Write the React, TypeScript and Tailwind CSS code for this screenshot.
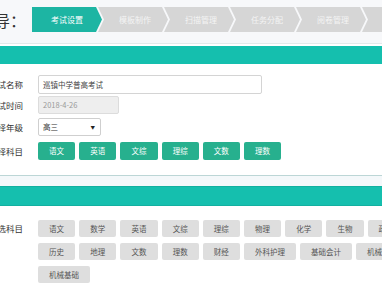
import React from "react";

const steps = ["考试设置", "模板制作", "扫描管理", "任务分配", "阅卷管理", "成绩分析"];
const picked = ["语文", "英语", "文综", "理综", "文数", "理数"];
const rows = [
  ["语文", "数学", "英语", "文综", "理综", "物理", "化学", "生物", "政治"],
  ["历史", "地理", "文数", "理数", "财经", "外科护理", "基础会计", "机械制图"],
  ["机械基础"],
];

function Label({ text }: { text: string }) {
  return (
    <div className="w-[60px] -ml-[37px] shrink-0 text-right text-[8.5px] text-[#333] leading-none">
      {text}
    </div>
  );
}

export default function App() {
  return (
    <div className="w-[382px] h-[287px] overflow-hidden bg-white font-['Noto_Sans_CJK_SC','Noto_Sans',sans-serif]">
      {/* header with steps */}
      <div className="h-[44px] bg-[#f7f8fa] border-b border-[#e3eaea] flex items-start pt-[7px]">
        <div className="-ml-[22px] w-[48px] shrink-0 h-[25px] flex items-center text-[16px] text-[#333] leading-none">
          向导：
        </div>
        <div className="ml-[6px] flex shrink-0">
          {steps.map((s, i) => (
            <div
              key={s}
              className={
                i === 0
                  ? "w-[70px] h-[25px] shrink-0 flex items-center justify-center text-[8px] text-white bg-[#1db5a3] [clip-path:polygon(0_0,calc(100%_-_6px)_0,100%_50%,calc(100%_-_6px)_100%,0_100%)]"
                  : "w-[70px] h-[25px] shrink-0 -ml-[4px] pl-[4px] flex items-center justify-center text-[8px] text-[#f4f4f4] bg-[#d6d6d6] [clip-path:polygon(0_0,calc(100%_-_6px)_0,100%_50%,calc(100%_-_6px)_100%,0_100%,6px_50%)]"
              }
            >
              {s}
            </div>
          ))}
        </div>
      </div>
      <div className="mt-[2px] h-[18px] bg-[#15bfae]" />

      {/* form */}
      <div className="flex items-center mt-[11px] h-[19px]">
        <Label text="考试名称" />
        <div className="ml-[15px] w-[224px] h-[19px] border border-[#d4d4d4] rounded-[2px] bg-white flex items-center pl-[4px] text-[7.5px] text-[#444]">
          巡镇中学普高考试
        </div>
      </div>
      <div className="flex items-center mt-[2px] h-[18px]">
        <Label text="考试时间" />
        <div className="ml-[15px] w-[81px] h-[18px] border border-[#dcdcdc] rounded-[2px] bg-[#eeeeee] flex items-center pl-[4px] text-[7.5px] text-[#9a9a9a]">
          2018-4-26
        </div>
      </div>
      <div className="flex items-center mt-[4px] h-[18px]">
        <Label text="选择年级" />
        <div className="ml-[15px] w-[63px] h-[18px] border border-[#cfcfcf] rounded-[2px] bg-white flex items-center justify-between pl-[4px] pr-[5px] text-[7.5px] text-[#333]">
          <span>高三</span>
          <span className="text-[4.5px] text-[#222]">▼</span>
        </div>
      </div>
      <div className="flex items-center mt-[6px] h-[18px]">
        <Label text="选择科目" />
        <div className="ml-[15px] flex gap-x-[4px]">
          {picked.map((p) => (
            <div
              key={p}
              className="w-[37.2px] h-[18px] rounded-[2px] bg-[#27b08e] flex items-center justify-center text-[7.5px] text-white"
            >
              {p}
            </div>
          ))}
        </div>
      </div>

      {/* section 2 header */}
      <div className="mt-[15px] border-t border-[#bcd6d6] h-[11px] bg-[#f4f8fa]" />
      <div className="h-[20px] bg-[#15bfae] border-y border-[#12b0a0]" />

      {/* subjects */}
      <div className="flex items-start mt-[14px]">
        <div className="h-[17px] flex items-center">
          <Label text="可选科目" />
        </div>
        <div className="ml-[15px] flex flex-col gap-y-[6px]">
          {rows.map((r, ri) => (
            <div key={ri} className="flex gap-x-[4px] flex-nowrap">
              {r.map((s) => (
                <div
                  key={s}
                  className={
                    s.length > 2
                      ? "w-[52px] h-[17px] shrink-0 rounded-[2px] bg-[#dedede] flex items-center justify-center text-[7.5px] text-[#555]"
                      : "w-[37.2px] h-[17px] shrink-0 rounded-[2px] bg-[#dedede] flex items-center justify-center text-[7.5px] text-[#555]"
                  }
                >
                  {s}
                </div>
              ))}
            </div>
          ))}
        </div>
      </div>
    </div>
  );
}
